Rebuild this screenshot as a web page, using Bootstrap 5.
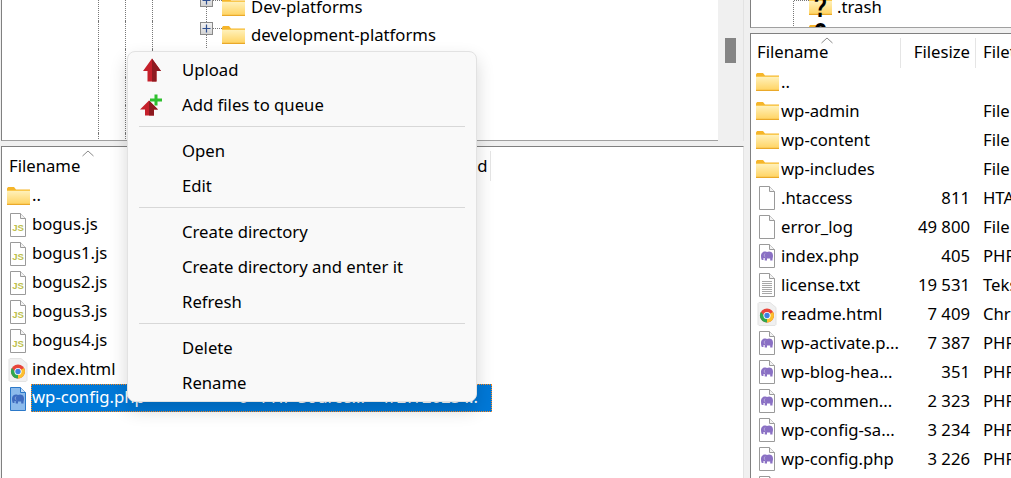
<!DOCTYPE html>
<html lang="en">
  <head>
    <meta charset="UTF-8" />
    <meta name="viewport" content="width=device-width, initial-scale=1.0" />
    <title>FTP client context menu</title>
    <link
      href="https://cdn.jsdelivr.net/npm/bootstrap@5.3.0/dist/css/bootstrap.min.css"
      rel="stylesheet"
    />
    <style>
      html,
      body {
        height: 478px;
        overflow: hidden;
      }
      body {
        background: #f0f0f0;
        color: #000;
        font-family: "Noto Sans", "Liberation Sans", sans-serif;
        font-size: 16.7px;
        line-height: 1;
        white-space: nowrap;
      }
      .sprite-sheet {
        position: absolute;
        width: 0;
        height: 0;
      }
      .left-side {
        width: 745px;
        flex-shrink: 0;
        padding-left: 1px;
      }
      .right-side {
        width: 266px;
        flex-shrink: 0;
        padding-left: 5px;
      }
      .tree-pane {
        background: #fff;
        border-left: 1px solid #808080;
        border-bottom: 1px solid #a0a0a0;
      }
      .left-side .tree-pane {
        height: 141px;
      }
      .right-side .tree-pane {
        height: 29px;
      }
      .tree-scroll {
        margin-top: -7px;
      }
      .tree-row {
        height: 28px;
      }
      .tree-row > * {
        flex-shrink: 0;
      }
      .left-side .tree-row {
        padding-left: 96px;
      }
      .right-side .tree-row {
        padding-left: 42px;
      }
      .right-side .tree-label {
        margin-left: 5px;
      }
      .guide {
        width: 27px;
        height: 100%;
        border-left: 1px dotted #777;
      }
      .tree-label {
        margin-left: 6px;
      }
      .unknown-icon {
        margin-top: -4px;
      }
      .scroll-gutter {
        width: 26px;
        margin-right: 1px;
        flex-shrink: 0;
        padding: 38px 7px 0;
        border-right: 1px solid #e3e3e3;
      }
      .scroll-thumb {
        height: 25px;
        background: #858585;
      }
      .sash {
        height: 5px;
        flex-shrink: 0;
      }
      .list-pane {
        background: #fff;
        border-left: 1px solid #808080;
        border-top: 1px solid #808080;
      }
      .left-side .list-pane {
        margin-right: 1px;
        border-right: 1px solid #e3e3e3;
      }
      .list-head {
        height: 34px;
        padding-top: 4px;
      }
      .head-cell {
        height: 100%;
        display: flex;
        align-items: center;
        flex-shrink: 0;
      }
      .sort-mark {
        position: absolute;
        top: 3px;
      }
      .head-sep {
        border-right: 1px solid #e5e5e5;
      }
      .file-row {
        height: 29px;
      }
      .file-row > * {
        flex-shrink: 0;
      }
      .file-icon {
        width: 26px;
        padding-left: 5px;
      }
      .right-side .file-icon {
        width: 30px;
      }
      .page-svg {
        margin-left: 2px;
      }
      .web-svg {
        margin-left: 1px;
      }
      .pick-row {
        height: 28px;
        width: 461px;
        margin: -2px 0 0 3px;
        padding-left: 1px;
        background: #0078d7;
        color: #fff;
        outline: 1px dotted #ff8a1e;
        outline-offset: -1px;
      }
      .pick-row > * {
        flex-shrink: 0;
      }
      .c-name {
        width: 150px;
      }
      .c-size {
        width: 66px;
      }
      .c-type {
        width: 133px;
        padding-left: 13px;
      }
      .r-name {
        width: 120px;
      }
      .r-size {
        width: 69px;
      }
      .r-type {
        padding-left: 13px;
      }
      .queue-menu {
        top: 51px;
        left: 127px;
        width: 350px;
        padding: 1px 0 0;
        margin: 0;
        background: #f9f9f9;
        border: 1px solid #e2e2e2;
        border-radius: 8px;
        font-size: 16.7px;
        box-shadow: 0 8px 18px rgba(0, 0, 0, 0.16);
      }
      .queue-menu .dropdown-item {
        height: 35px;
        padding: 0 0 0 10px;
        color: #000;
      }
      .queue-menu .dropdown-divider {
        margin: 3px 11px 7px;
        border-color: #d8d8d8;
        opacity: 1;
      }
      .menu-glyph {
        width: 44px;
        flex-shrink: 0;
      }
    </style>
  </head>
  <body class="d-flex position-relative">
    <!-- shared icons -->
    <svg class="sprite-sheet" aria-hidden="true">
      <defs>
        <linearGradient id="folderFill" x1="0" y1="0" x2="0" y2="1">
          <stop offset="0" stop-color="#fff3c0" />
          <stop offset="1" stop-color="#ffd25e" />
        </linearGradient>
        <linearGradient id="boxFill" x1="0" y1="0" x2="0" y2="1">
          <stop offset="0" stop-color="#f4f4f4" />
          <stop offset="1" stop-color="#d2d2d2" />
        </linearGradient>
        <symbol id="i-folder" viewBox="0 0 23 18">
          <path d="M0 1.5 1 0h6l2 2.5H23V4H0z" fill="#f5b52a" />
          <rect y="3" width="23" height="15" fill="url(#folderFill)" />
          <rect y="16.8" width="23" height="1.2" fill="#eaa92a" />
          <rect x="0" y="3" width="23" height="1" fill="#f9c84e" />
        </symbol>
        <symbol id="i-page" viewBox="0 0 18 24">
          <path d="M1.5.5h10l5 5v18h-15z" fill="#fff" stroke="#9a9a9a" />
          <path d="M11.5.5v5h5" fill="#f3f3f3" stroke="#9a9a9a" />
        </symbol>
        <symbol id="i-js" viewBox="0 0 18 24">
          <use href="#i-page" />
          <text x="3.2" y="17.5" font-family="Liberation Sans" font-size="9.6" font-weight="700" fill="#bdbf4e">JS</text>
        </symbol>
        <symbol id="i-elephant" viewBox="0 0 18 24">
          <path d="M3 11.500C3 9 5 7.500 7 7.500c1 0 1.500.3 2 .5 1-.6 3-.8 4.200 0C14.700 9 15 10.500 15 12c0 1-.3 2-.5 3v1.500h-2.300V14.500H9v2H6.700v-2.500H5.500V16H3.800C3.200 15 3 13 3 11.500z" />
          <path d="M7 9.500c-1 1-1 3 .3 3.500" fill="none" stroke="#fff" stroke-opacity=".55" stroke-width=".7" />
        </symbol>
        <symbol id="i-php" viewBox="0 0 18 24">
          <use href="#i-page" />
          <use href="#i-elephant" fill="#8a70c4" />
        </symbol>
        <symbol id="i-php-sel" viewBox="0 0 18 24">
          <path d="M1.500.5h10l5 5v18h-15z" fill="#8cbbec" stroke="#2b78c8" />
          <path d="M11.500.5v5h5" fill="#c6def6" stroke="#2b78c8" />
          <use href="#i-elephant" fill="#3f6cc0" />
        </symbol>
        <symbol id="i-txt" viewBox="0 0 18 24">
          <use href="#i-page" />
          <path d="M4 8.500h10M4 10.500h10M4 12.500h10M4 14.500h10M4 16.500h10M4 18.500h10M4 20.500h10" stroke="#a8a8a8" />
        </symbol>
        <symbol id="i-chrome" viewBox="0 0 20 24">
          <path d="M1 1.500 2 .5h11l6 5v17l-1 1H2l-1-1z" fill="#f0f0f0" stroke="#e3e3e3" />
          <circle cx="10" cy="13.500" r="7" fill="#e8453a" />
          <path d="M10 13.500 3.900 17a7 7 0 0 0 6.100 3.500z" fill="#2fa84f" />
          <path d="M10 13.500v7a7 7 0 0 0 7-7 7 7 0 0 0-1-3.500z" fill="#fbc02d" />
          <path d="M3.900 17A7 7 0 0 1 3.900 10L7 13.500l.5 3z" fill="#2fa84f" />
          <circle cx="10" cy="13.500" r="3.600" fill="#fff" />
          <circle cx="10" cy="13.500" r="2.700" fill="#3f7fe0" />
        </symbol>
        <symbol id="i-unknown" viewBox="0 0 23 28">
          <use href="#i-folder" y="6" height="18" width="23" />
          <text transform="translate(11.500 26) scale(1 1.45)" text-anchor="middle" font-family="Liberation Sans" font-size="22" font-weight="700" fill="#000">?</text>
        </symbol>
        <symbol id="i-expander" viewBox="0 0 43 28">
          <path d="M27.500 0v28" stroke="#777" stroke-dasharray="1 1" />
          <path d="M34 7.500h9" stroke="#777" stroke-dasharray="1 1" />
          <rect x="21.500" y="1.500" width="12" height="12" fill="url(#boxFill)" stroke="#8a8a8a" />
          <path d="M27.500 3.500v8M23.500 7.500h8" stroke="#2f4f90" stroke-width="1.200" />
        </symbol>
      </defs>
    </svg>

    <div class="left-side d-flex flex-column">
      <div class="d-flex">
        <div class="tree-pane flex-grow-1 overflow-hidden">
          <div class="tree-scroll">
            <div class="tree-row d-flex align-items-center">
              <span class="guide"></span><span class="guide"></span><span class="guide"></span>
              <svg width="43" height="28"><use href="#i-expander" /></svg>
              <svg width="23" height="18"><use href="#i-folder" /></svg>
              <span class="tree-label">Dev-platforms</span>
            </div>
            <div class="tree-row d-flex align-items-center">
              <span class="guide"></span><span class="guide"></span><span class="guide"></span>
              <svg width="43" height="28"><use href="#i-expander" /></svg>
              <svg width="23" height="18"><use href="#i-folder" /></svg>
              <span class="tree-label">development-platforms</span>
            </div>
            <div class="tree-row d-flex"><span class="guide"></span><span class="guide"></span><span class="guide"></span></div>
            <div class="tree-row d-flex"><span class="guide"></span><span class="guide"></span><span class="guide"></span></div>
            <div class="tree-row d-flex"><span class="guide"></span><span class="guide"></span><span class="guide"></span></div>
            <div class="tree-row d-flex"><span class="guide"></span><span class="guide"></span><span class="guide"></span></div>
          </div>
        </div>
        <div class="scroll-gutter"><div class="scroll-thumb"></div></div>
      </div>
      <div class="sash"></div>
      <div class="list-pane flex-grow-1 overflow-hidden">
        <div class="list-head d-flex position-relative">
          <svg class="sort-mark" style="left: 80px" width="12" height="7"><path d="M.5 6 6 1l5.500 5" fill="none" stroke="#8a8a8a" /></svg>
          <div class="head-cell" style="width: 173px; padding-left: 7px">Filename</div>
          <div class="head-cell justify-content-end" style="width: 72px">Filesize</div>
          <div class="head-cell" style="width: 134px; padding-left: 13px">Filetype</div>
          <div class="head-cell head-sep" style="width: 110px">Last modified</div>
        </div>
        <div class="file-row d-flex align-items-center"><span class="file-icon"><svg class="d-block" width="23" height="18"><use href="#i-folder" /></svg></span><span class="ms-1">..</span></div>
        <div class="file-row d-flex align-items-center"><span class="file-icon"><svg class="d-block page-svg" width="18" height="24"><use href="#i-js" /></svg></span><span class="ms-1">bogus.js</span></div>
        <div class="file-row d-flex align-items-center"><span class="file-icon"><svg class="d-block page-svg" width="18" height="24"><use href="#i-js" /></svg></span><span class="ms-1">bogus1.js</span></div>
        <div class="file-row d-flex align-items-center"><span class="file-icon"><svg class="d-block page-svg" width="18" height="24"><use href="#i-js" /></svg></span><span class="ms-1">bogus2.js</span></div>
        <div class="file-row d-flex align-items-center"><span class="file-icon"><svg class="d-block page-svg" width="18" height="24"><use href="#i-js" /></svg></span><span class="ms-1">bogus3.js</span></div>
        <div class="file-row d-flex align-items-center"><span class="file-icon"><svg class="d-block page-svg" width="18" height="24"><use href="#i-js" /></svg></span><span class="ms-1">bogus4.js</span></div>
        <div class="file-row d-flex align-items-center"><span class="file-icon"><svg class="d-block web-svg" width="20" height="24"><use href="#i-chrome" /></svg></span><span class="ms-1">index.html</span></div>
        <div class="file-row d-flex align-items-center">
          <span class="file-icon"><svg class="d-block page-svg" width="18" height="24"><use href="#i-php-sel" /></svg></span>
          <div class="pick-row d-flex align-items-center">
            <span class="c-name">wp-config.php</span>
            <span class="c-size text-end">0</span>
            <span class="c-type">PHP Source...</span>
            <span>1/27/2023 ...</span>
          </div>
        </div>
      </div>
    </div>

    <div class="right-side d-flex flex-column">
      <div class="tree-pane overflow-hidden">
        <div class="tree-scroll">
          <div class="tree-row d-flex align-items-center">
            <svg width="16" height="28"><path d="M.5 0v28M1 7.500h15" stroke="#777" stroke-dasharray="1 1" fill="none" /></svg>
            <svg class="unknown-icon" width="23" height="28"><use href="#i-unknown" /></svg>
            <span class="tree-label">.trash</span>
          </div>
          <div class="tree-row d-flex align-items-center">
            <svg width="16" height="28"><path d="M.5 0v28" stroke="#777" stroke-dasharray="1 1" /></svg>
            <svg class="unknown-icon" width="23" height="28"><use href="#i-unknown" /></svg>
          </div>
        </div>
      </div>
      <div class="sash"></div>
      <div class="list-pane flex-grow-1 overflow-hidden">
        <div class="list-head d-flex position-relative">
          <svg class="sort-mark" style="left: 70px" width="12" height="7"><path d="M.5 6 6 1l5.500 5" fill="none" stroke="#8a8a8a" /></svg>
          <div class="head-cell head-sep" style="width: 150px; padding-left: 6px">Filename</div>
          <div class="head-cell head-sep justify-content-end" style="width: 75px; padding-right: 5px">Filesize</div>
          <div class="head-cell" style="padding-left: 7px">Filetype</div>
        </div>
        <div class="file-row d-flex align-items-center"><span class="file-icon"><svg class="d-block" width="23" height="18"><use href="#i-folder" /></svg></span><span class="r-name">..</span></div>
        <div class="file-row d-flex align-items-center"><span class="file-icon"><svg class="d-block" width="23" height="18"><use href="#i-folder" /></svg></span><span class="r-name">wp-admin</span><span class="r-size"></span><span class="r-type">File folder</span></div>
        <div class="file-row d-flex align-items-center"><span class="file-icon"><svg class="d-block" width="23" height="18"><use href="#i-folder" /></svg></span><span class="r-name">wp-content</span><span class="r-size"></span><span class="r-type">File folder</span></div>
        <div class="file-row d-flex align-items-center"><span class="file-icon"><svg class="d-block" width="23" height="18"><use href="#i-folder" /></svg></span><span class="r-name">wp-includes</span><span class="r-size"></span><span class="r-type">File folder</span></div>
        <div class="file-row d-flex align-items-center"><span class="file-icon"><svg class="d-block page-svg" width="18" height="24"><use href="#i-page" /></svg></span><span class="r-name">.htaccess</span><span class="r-size text-end">811</span><span class="r-type">HTACCESS</span></div>
        <div class="file-row d-flex align-items-center"><span class="file-icon"><svg class="d-block page-svg" width="18" height="24"><use href="#i-page" /></svg></span><span class="r-name">error_log</span><span class="r-size text-end">49 800</span><span class="r-type">File</span></div>
        <div class="file-row d-flex align-items-center"><span class="file-icon"><svg class="d-block page-svg" width="18" height="24"><use href="#i-php" /></svg></span><span class="r-name">index.php</span><span class="r-size text-end">405</span><span class="r-type">PHP Source</span></div>
        <div class="file-row d-flex align-items-center"><span class="file-icon"><svg class="d-block page-svg" width="18" height="24"><use href="#i-txt" /></svg></span><span class="r-name">license.txt</span><span class="r-size text-end">19 531</span><span class="r-type">Tekst</span></div>
        <div class="file-row d-flex align-items-center"><span class="file-icon"><svg class="d-block web-svg" width="20" height="24"><use href="#i-chrome" /></svg></span><span class="r-name">readme.html</span><span class="r-size text-end">7 409</span><span class="r-type">Chrome</span></div>
        <div class="file-row d-flex align-items-center"><span class="file-icon"><svg class="d-block page-svg" width="18" height="24"><use href="#i-php" /></svg></span><span class="r-name">wp-activate.p...</span><span class="r-size text-end">7 387</span><span class="r-type">PHP Source</span></div>
        <div class="file-row d-flex align-items-center"><span class="file-icon"><svg class="d-block page-svg" width="18" height="24"><use href="#i-php" /></svg></span><span class="r-name">wp-blog-hea...</span><span class="r-size text-end">351</span><span class="r-type">PHP Source</span></div>
        <div class="file-row d-flex align-items-center"><span class="file-icon"><svg class="d-block page-svg" width="18" height="24"><use href="#i-php" /></svg></span><span class="r-name">wp-commen...</span><span class="r-size text-end">2 323</span><span class="r-type">PHP Source</span></div>
        <div class="file-row d-flex align-items-center"><span class="file-icon"><svg class="d-block page-svg" width="18" height="24"><use href="#i-php" /></svg></span><span class="r-name">wp-config-sa...</span><span class="r-size text-end">3 234</span><span class="r-type">PHP Source</span></div>
        <div class="file-row d-flex align-items-center"><span class="file-icon"><svg class="d-block page-svg" width="18" height="24"><use href="#i-php" /></svg></span><span class="r-name">wp-config.php</span><span class="r-size text-end">3 226</span><span class="r-type">PHP Source</span></div>
        <div class="file-row d-flex align-items-center"><span class="file-icon"><svg class="d-block page-svg" width="18" height="24"><use href="#i-page" /></svg></span></div>
      </div>
    </div>

    <!-- context menu -->
    <div class="dropdown-menu show queue-menu">
      <a class="dropdown-item d-flex align-items-center" href="#">
        <span class="menu-glyph">
          <svg class="d-block" width="26" height="26" viewBox="0 0 26 26">
            <path d="M14 .5 23 13h-4.500v10.500h-9V13H5z" fill="#c5202b" />
            <path d="M14 .5 23 13h-4.500v10.500H14z" fill="#8e1a20" />
          </svg>
        </span>
        Upload
      </a>
      <a class="dropdown-item d-flex align-items-center" href="#">
        <span class="menu-glyph">
          <svg class="d-block" width="26" height="26" viewBox="0 0 26 26">
            <path d="M11 7.500 20 16.500h-4v6H7v-6H2z" fill="#c5202b" />
            <path d="M11 7.500 20 16.500h-4v6h-5z" fill="#8e1a20" />
            <path d="M16.500 1.500h3v4h4.500v3h-4.500v4h-3v-4H12v-3h4.500z" fill="#2fc02f" />
          </svg>
        </span>
        Add files to queue
      </a>
      <hr class="dropdown-divider" />
      <a class="dropdown-item d-flex align-items-center" href="#"><span class="menu-glyph"></span>Open</a>
      <a class="dropdown-item d-flex align-items-center" href="#"><span class="menu-glyph"></span>Edit</a>
      <hr class="dropdown-divider" />
      <a class="dropdown-item d-flex align-items-center" href="#"><span class="menu-glyph"></span>Create directory</a>
      <a class="dropdown-item d-flex align-items-center" href="#"><span class="menu-glyph"></span>Create directory and enter it</a>
      <a class="dropdown-item d-flex align-items-center" href="#"><span class="menu-glyph"></span>Refresh</a>
      <hr class="dropdown-divider" />
      <a class="dropdown-item d-flex align-items-center" href="#"><span class="menu-glyph"></span>Delete</a>
      <a class="dropdown-item d-flex align-items-center" href="#"><span class="menu-glyph"></span>Rename</a>
    </div>

    <script src="https://cdn.jsdelivr.net/npm/bootstrap@5.3.0/dist/js/bootstrap.bundle.min.js"></script>
  </body>
</html>
